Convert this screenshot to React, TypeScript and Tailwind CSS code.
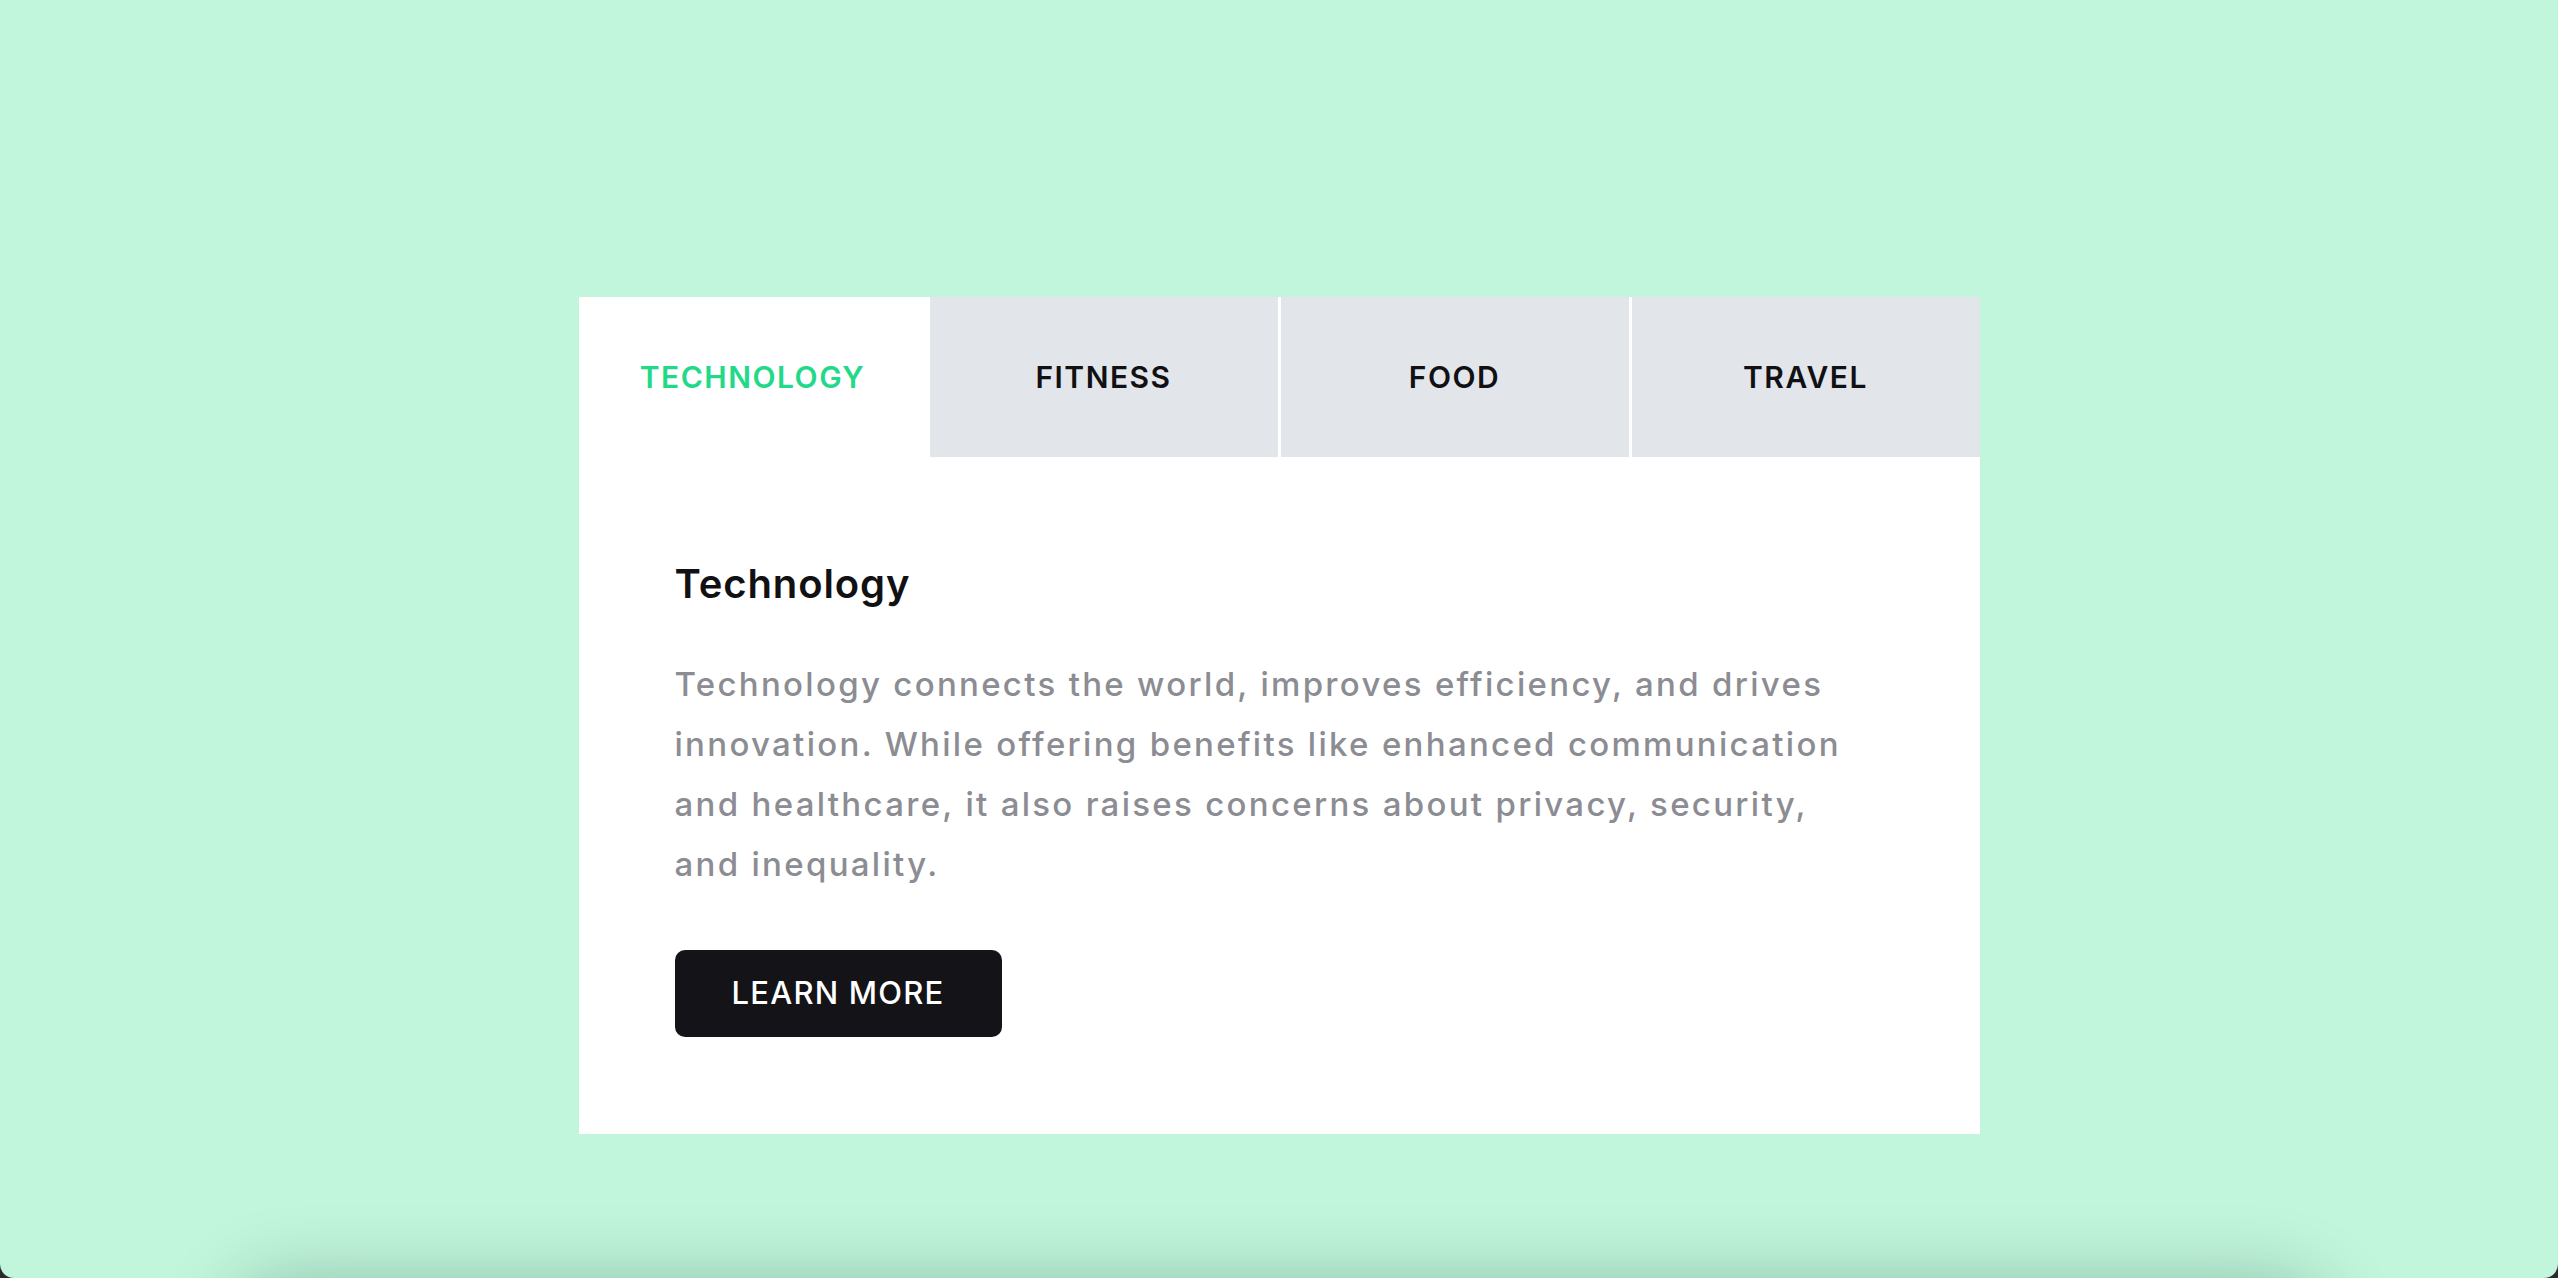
import React, { useState } from "react";

const tabs = [
  {
    id: "technology",
    label: "TECHNOLOGY",
    title: "Technology",
    body: "Technology connects the world, improves efficiency, and drives innovation. While offering benefits like enhanced communication and healthcare, it also raises concerns about privacy, security, and inequality.",
  },
  {
    id: "fitness",
    label: "FITNESS",
    title: "Fitness",
    body: "Fitness improves physical health, boosts energy, and strengthens the mind. Regular exercise supports longevity, reduces stress, and builds lasting, healthy habits.",
  },
  {
    id: "food",
    label: "FOOD",
    title: "Food",
    body: "Food nourishes the body, brings people together, and reflects culture. Balanced meals support wellbeing, while shared dishes create memories and connection.",
  },
  {
    id: "travel",
    label: "TRAVEL",
    title: "Travel",
    body: "Travel broadens perspectives, introduces new cultures, and creates unforgettable experiences. It inspires curiosity, builds confidence, and connects people worldwide.",
  },
];

export default function App() {
  const [active, setActive] = useState("technology");
  const current = tabs.find((t) => t.id === active)!;

  return (
    <div className="h-[1278px] w-full overflow-hidden bg-[#2b2b2b] font-['Inter','Noto_Sans',sans-serif]">
      <div className="flex h-full flex-col items-center overflow-hidden rounded-b-[14px] bg-[#c1f5dc]">
        <div className="mt-[297px] w-[1401px] shrink-0 bg-white">
          <div className="grid grid-cols-4 gap-[3px]">
            {tabs.map((t) => {
              const isActive = t.id === active;
              return (
                <button
                  key={t.id}
                  onClick={() => setActive(t.id)}
                  className={
                    isActive
                      ? "flex h-[160px] items-center justify-center bg-white text-[30px] font-semibold tracking-[1.5px] text-[#22d98a]"
                      : "flex h-[160px] items-center justify-center bg-[#e2e5ea] text-[30px] font-semibold tracking-[1.5px] text-[#111114]"
                  }
                >
                  {t.label}
                </button>
              );
            })}
          </div>
          <div className="px-[96px] pt-[97px] pb-[97px]">
            <h2 className="text-[40px] font-semibold leading-[60px] tracking-[0.9px] text-[#111114]">
              {current.title}
            </h2>
            <p className="mt-[40px] w-[1200px] text-[33px] font-medium leading-[60px] tracking-[2.3px] text-[#8c8c93]">
              {current.body}
            </p>
            <button className="mt-[56px] flex h-[87px] w-[327px] items-center justify-center rounded-[10px] bg-[#141418] text-[31px] font-medium tracking-[1.2px] text-white">
              LEARN MORE
            </button>
          </div>
        </div>
        <div className="mt-auto mb-[-120px] h-[120px] w-[2100px] shrink-0 rounded-[60px] bg-[#b5e4cc] shadow-[0_0_70px_rgba(0,50,25,0.25)]" />
      </div>
    </div>
  );
}
